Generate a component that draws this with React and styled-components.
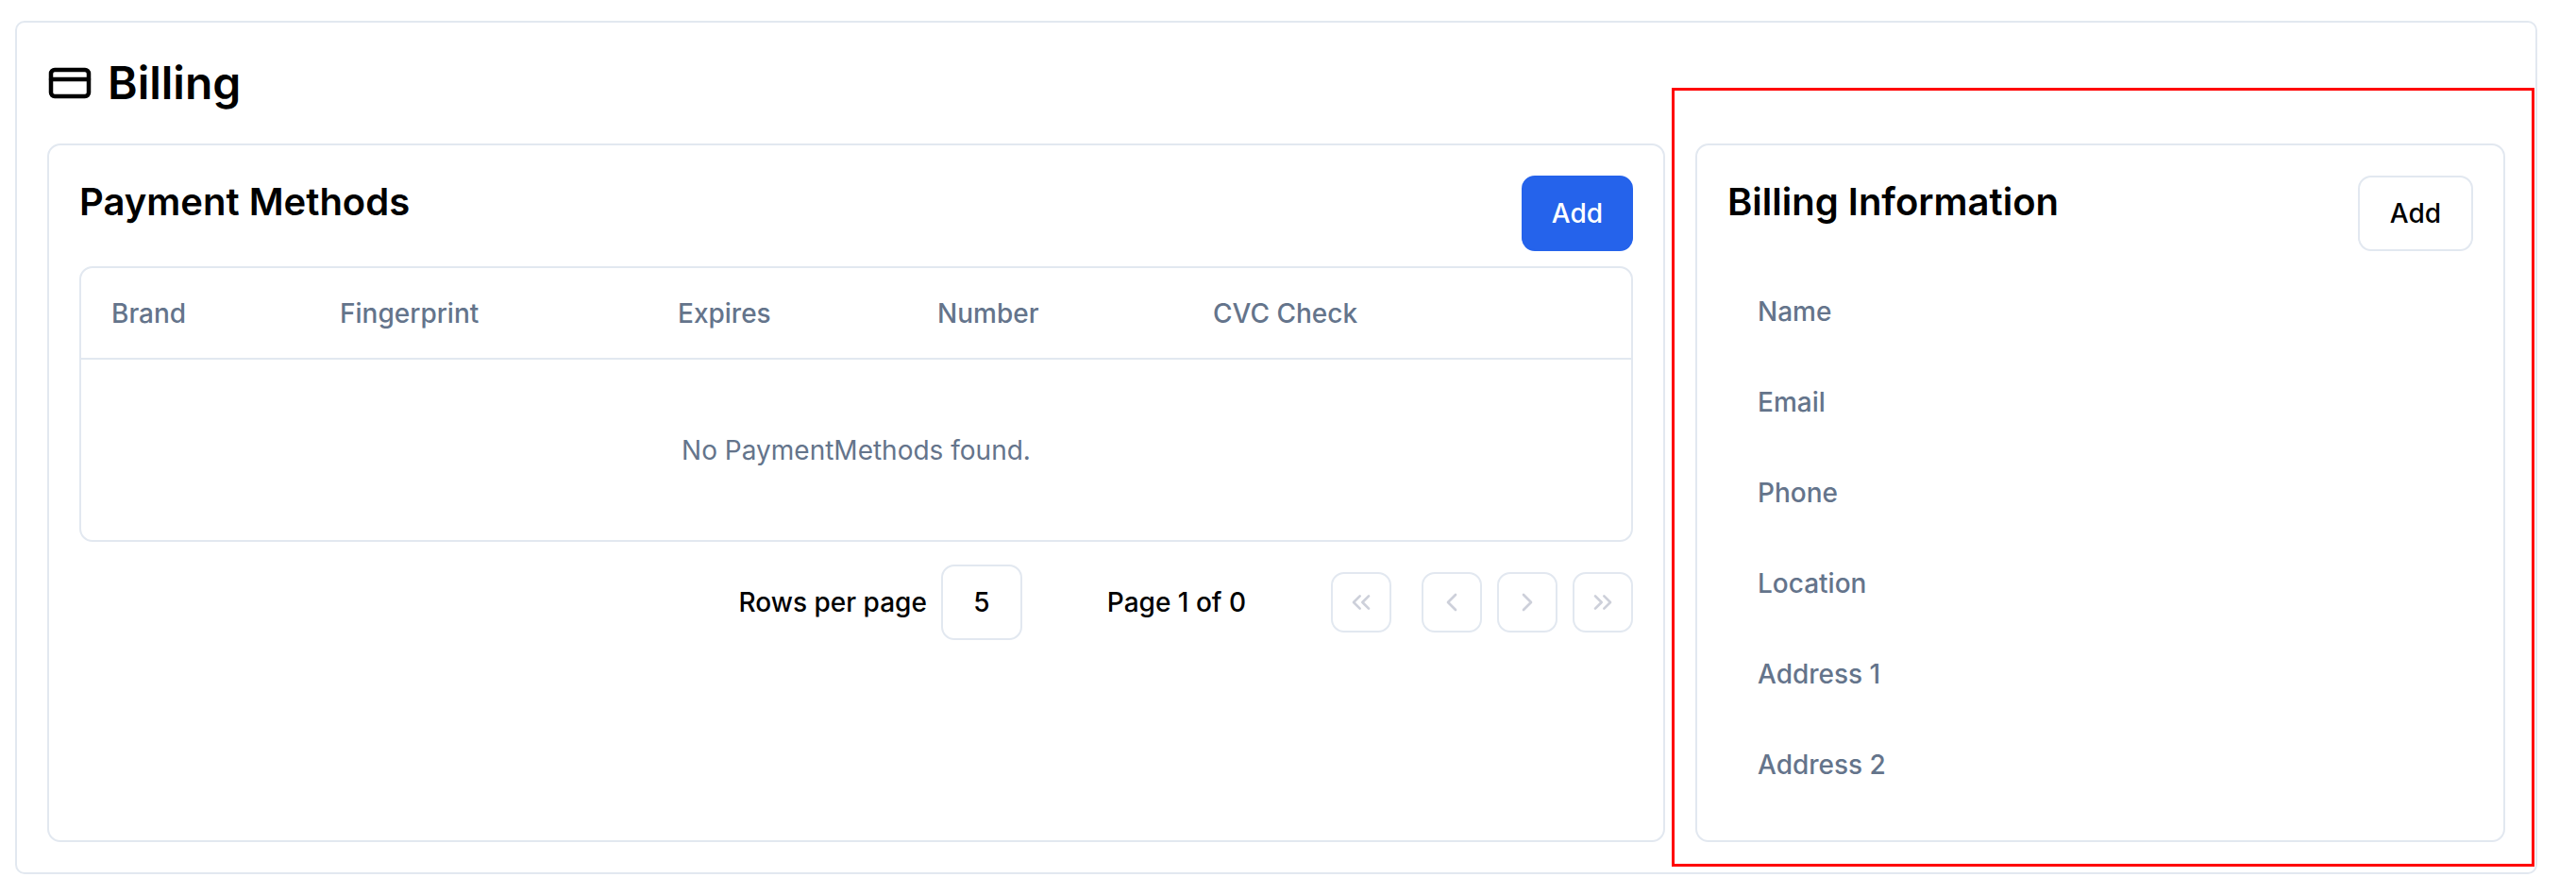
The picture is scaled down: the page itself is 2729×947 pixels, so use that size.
import React from "react";
import styled, { createGlobalStyle } from "styled-components";
import {
  CreditCard,
  ChevronLeft,
  ChevronRight,
  ChevronsLeft,
  ChevronsRight,
} from "lucide-react";

const GlobalStyle = createGlobalStyle`
  * { box-sizing: border-box; }
  html, body { margin: 0; background: #fff; }
  body {
    font-family: Inter, "Liberation Sans", sans-serif;
    color: #000;
  }
`;

const Page = styled.div`
  position: relative;
  height: 947px;
  overflow: hidden;
  padding: 22px 41px 0 16px;
`;

const Panel = styled.section`
  border: 2px solid #e2e8f0;
  border-radius: 10px;
  padding: 32px;
`;

const PageTitle = styled.h1`
  display: flex;
  align-items: center;
  gap: 16px;
  height: 63px;
  margin: 0 0 33px;
  font-size: 48px;
  line-height: 63px;
  font-weight: 600;
`;

const Columns = styled.div`
  display: grid;
  grid-template-columns: 1fr 858px;
  gap: 32px;
`;

const Card = styled.div`
  border: 2px solid #e2e8f0;
  border-radius: 14px;
  padding: 32px;
`;

const CardHeader = styled.div`
  display: flex;
  justify-content: space-between;
  align-items: flex-start;
  height: 96px;
`;

const CardTitle = styled.h2`
  margin: 0;
  font-size: 40px;
  line-height: 56px;
  font-weight: 600;
`;

const Button = styled.button`
  height: 80px;
  padding: 0 ${(p) => (p.$primary ? "30px" : "32px")};
  border: 2px solid ${(p) => (p.$primary ? "#2563eb" : "#e2e8f0")};
  border-radius: 14px;
  background: ${(p) => (p.$primary ? "#2563eb" : "#fff")};
  color: ${(p) => (p.$primary ? "#fff" : "#000")};
  font: 500 28px Inter, sans-serif;
`;

const TableBox = styled.div`
  border: 2px solid #e2e8f0;
  border-radius: 14px;
`;

const HeadRow = styled.div`
  display: grid;
  grid-template-columns: 242px 358px 275px 292px 1fr;
  align-items: center;
  height: 97px;
  border-bottom: 2px solid #e2e8f0;
`;

const HeadCell = styled.div`
  padding-left: 32px;
  font-size: 28px;
  font-weight: 500;
  color: #64748b;
`;

const EmptyRow = styled.div`
  display: flex;
  align-items: center;
  justify-content: center;
  height: 191px;
  font-size: 28px;
  color: #64748b;
`;

const Pagination = styled.div`
  display: flex;
  align-items: center;
  justify-content: flex-end;
  margin-top: 24px;
  font-size: 28px;
  font-weight: 500;
`;

const RowsLabel = styled.span`
  margin-right: 15px;
`;

const RowsSelect = styled.div`
  display: flex;
  align-items: center;
  justify-content: center;
  width: 86px;
  height: 80px;
  border: 2px solid #e2e8f0;
  border-radius: 14px;
`;

const PageLabel = styled.span`
  margin: 0 90px 0 90px;
`;

const PagerButtons = styled.div`
  display: flex;
  gap: 16px;
`;

const PagerButton = styled.button`
  display: flex;
  align-items: center;
  justify-content: center;
  width: 64px;
  height: 64px;
  margin-right: ${(p) => (p.$spaced ? "16px" : "0")};
  padding: 0;
  border: 2px solid #e2e8f0;
  border-radius: 14px;
  background: #fff;
  color: #cdd0da;
`;

const InfoRow = styled.div`
  display: flex;
  align-items: center;
  height: 96px;
  padding-left: 32px;
  font-size: 28px;
  font-weight: 500;
  color: #64748b;
`;

const Highlight = styled.div`
  position: absolute;
  left: 1771px;
  top: 93px;
  width: 914px;
  height: 825px;
  border: 3px solid #ff0000;
  pointer-events: none;
`;

const headers = ["Brand", "Fingerprint", "Expires", "Number", "CVC Check"];
const infoFields = ["Name", "Email", "Phone", "Location", "Address 1", "Address 2"];

export default function App() {
  return (
    <Page>
      <GlobalStyle />
      <Panel>
        <PageTitle>
          <CreditCard size={48} strokeWidth={2.25} />
          Billing
        </PageTitle>
        <Columns>
          <Card>
            <CardHeader>
              <CardTitle>Payment Methods</CardTitle>
              <Button $primary>Add</Button>
            </CardHeader>
            <TableBox>
              <HeadRow>
                {headers.map((h) => (
                  <HeadCell key={h}>{h}</HeadCell>
                ))}
              </HeadRow>
              <EmptyRow>No PaymentMethods found.</EmptyRow>
            </TableBox>
            <Pagination>
              <RowsLabel>Rows per page</RowsLabel>
              <RowsSelect>5</RowsSelect>
              <PageLabel>Page 1 of 0</PageLabel>
              <PagerButtons>
                <PagerButton $spaced disabled>
                  <ChevronsLeft size={32} />
                </PagerButton>
                <PagerButton disabled>
                  <ChevronLeft size={32} />
                </PagerButton>
                <PagerButton disabled>
                  <ChevronRight size={32} />
                </PagerButton>
                <PagerButton disabled>
                  <ChevronsRight size={32} />
                </PagerButton>
              </PagerButtons>
            </Pagination>
          </Card>
          <Card>
            <CardHeader>
              <CardTitle>Billing Information</CardTitle>
              <Button>Add</Button>
            </CardHeader>
            {infoFields.map((f) => (
              <InfoRow key={f}>{f}</InfoRow>
            ))}
          </Card>
        </Columns>
      </Panel>
      <Highlight />
    </Page>
  );
}
